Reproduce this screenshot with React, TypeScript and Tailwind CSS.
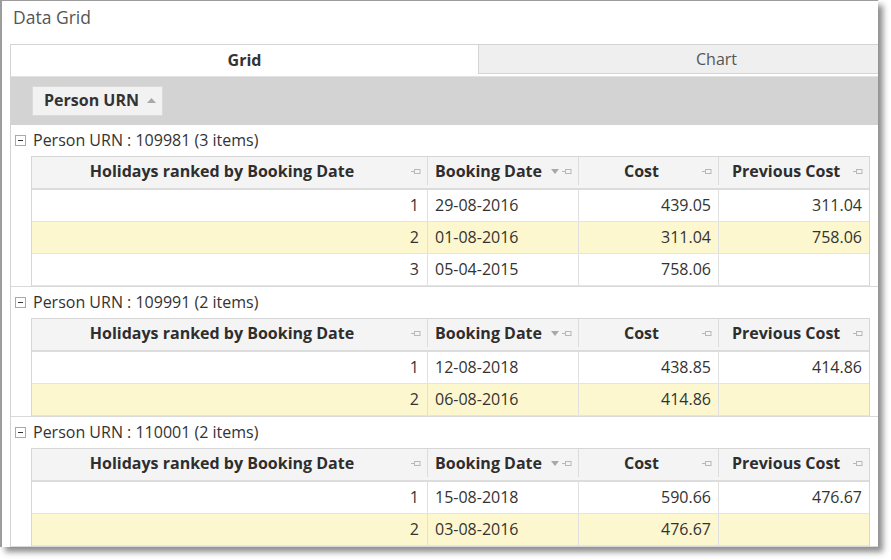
import React from "react";

const groups = [
  {
    urn: "109981",
    rows: [
      ["1", "29-08-2016", "439.05", "311.04"],
      ["2", "01-08-2016", "311.04", "758.06"],
      ["3", "05-04-2015", "758.06", ""],
    ],
  },
  {
    urn: "109991",
    rows: [
      ["1", "12-08-2018", "438.85", "414.86"],
      ["2", "06-08-2016", "414.86", ""],
    ],
  },
  {
    urn: "110001",
    rows: [
      ["1", "15-08-2018", "590.66", "476.67"],
      ["2", "03-08-2016", "476.67", ""],
    ],
  },
];

function Pin() {
  return (
    <svg width="10" height="7" viewBox="0 0 10 7" className="shrink-0">
      <line x1="0" y1="3.5" x2="3" y2="3.5" stroke="#b8b8b8" strokeWidth="1" />
      <rect x="3.5" y="1.5" width="5.5" height="4" fill="none" stroke="#b8b8b8" strokeWidth="1" />
    </svg>
  );
}

function Down() {
  return (
    <svg width="8" height="5" viewBox="0 0 8 5" className="shrink-0">
      <polygon points="0,0 8,0 4,5" fill="#a8a8a8" />
    </svg>
  );
}

function Up() {
  return (
    <svg width="9" height="5" viewBox="0 0 9 5" className="shrink-0">
      <polygon points="0,5 9,5 4.5,0" fill="#a8a8a8" />
    </svg>
  );
}

function Minus() {
  return (
    <div className="w-[11px] h-[11px] border border-[#a9a9a9] bg-white flex items-center justify-center shrink-0">
      <div className="w-[5px] h-[1px] bg-[#333]" />
    </div>
  );
}

export default function App() {
  return (
    <div
      className="w-[891px] h-[560px] bg-white overflow-hidden"
      style={{ fontFamily: '"Open Sans", "Noto Sans", sans-serif' }}
    >
      <div className="w-[878px] h-[547px] border-t border-l-2 border-[#9c9c9c] bg-white shadow-[5px_5px_6px_rgba(0,0,0,0.45)] overflow-hidden flex flex-col">
        <div className="h-[43px] pl-[11px] pt-[3px] text-[17.5px] text-[#555]">Data Grid</div>
        <div className="ml-[8px] flex-1 border-l border-[#d4d4d4] flex flex-col overflow-hidden">
          <div className="flex h-[32px] border-t border-[#d4d4d4] text-[16px] pb-[2px]">
            <div className="w-[467px] shrink-0 flex items-center justify-center font-bold text-[#333] bg-white">Grid</div>
            <div className="w-[476px] shrink-0 flex items-center justify-center bg-[#efefef] border-l border-b border-[#d4d4d4] text-[#555]">Chart</div>
          </div>
          <div className="h-[49px] bg-[#d3d3d3] border-t border-[#e2e2e2] flex items-start pl-[21px] pt-[9px]">
            <div className="h-[30px] w-[131px] bg-[#f2f2f2] border border-[#dadada] flex items-center pl-[11px] pr-[5px] gap-[8px] pb-[2px]">
              <span className="text-[16px] font-bold text-[#333]">Person URN</span>
              <Up />
            </div>
          </div>
          {groups.map((g) => (
            <div key={g.urn} className="border-b border-[#d9d9d9] shrink-0">
              <div className="h-[31px] flex items-center pl-[4px] gap-[7px] text-[16px] text-[#333]">
                <Minus />
                <span className="pb-[1px]">Person URN : {g.urn} ({g.rows.length} items)</span>
              </div>
              <div className="ml-[20px] w-[839px] border-l border-r border-t border-[#d6d6d6] text-[#333] text-[16px]">
                <div className="flex h-[33px] bg-[#f4f4f4] border-b-2 border-[#dcdcdc] font-bold text-[#2e2e2e] pb-[3px]">
                  <div className="w-[396px] border-r border-[#dcdcdc] flex items-center pl-[1px] pr-[6px]">
                    <span className="flex-1 text-center">Holidays ranked by Booking Date</span>
                    <Pin />
                  </div>
                  <div className="w-[151px] border-r border-[#dcdcdc] flex items-center pl-[7px] pr-[6px]">
                    <span className="flex-1 whitespace-nowrap">Booking Date</span>
                    <Down />
                    <span className="w-[3px]" />
                    <Pin />
                  </div>
                  <div className="w-[140px] border-r border-[#dcdcdc] flex items-center pl-[2px] pr-[6px]">
                    <span className="flex-1 text-center">Cost</span>
                    <Pin />
                  </div>
                  <div className="flex-1 flex items-center pl-[13px] pr-[6px]">
                    <span className="flex-1">Previous Cost</span>
                    <Pin />
                  </div>
                </div>
                {g.rows.map((r, i) => (
                  <div
                    key={i}
                    className={
                      "flex h-[32px] border-b border-[#e4e4e4] " +
                      (i % 2 === 1 ? "bg-[#fdf7cf]" : "bg-white")
                    }
                  >
                    <div className="w-[396px] border-r border-[#e0e0e0] flex items-center justify-end pr-[8px] pb-[2px]">{r[0]}</div>
                    <div className="w-[151px] border-r border-[#e0e0e0] flex items-center pl-[7px] pb-[2px]">{r[1]}</div>
                    <div className="w-[140px] border-r border-[#e0e0e0] flex items-center justify-end pr-[7px] pb-[2px]">{r[2]}</div>
                    <div className="flex-1 flex items-center justify-end pr-[7px] pb-[2px]">{r[3]}</div>
                  </div>
                ))}
              </div>
            </div>
          ))}
        </div>
      </div>
    </div>
  );
}
